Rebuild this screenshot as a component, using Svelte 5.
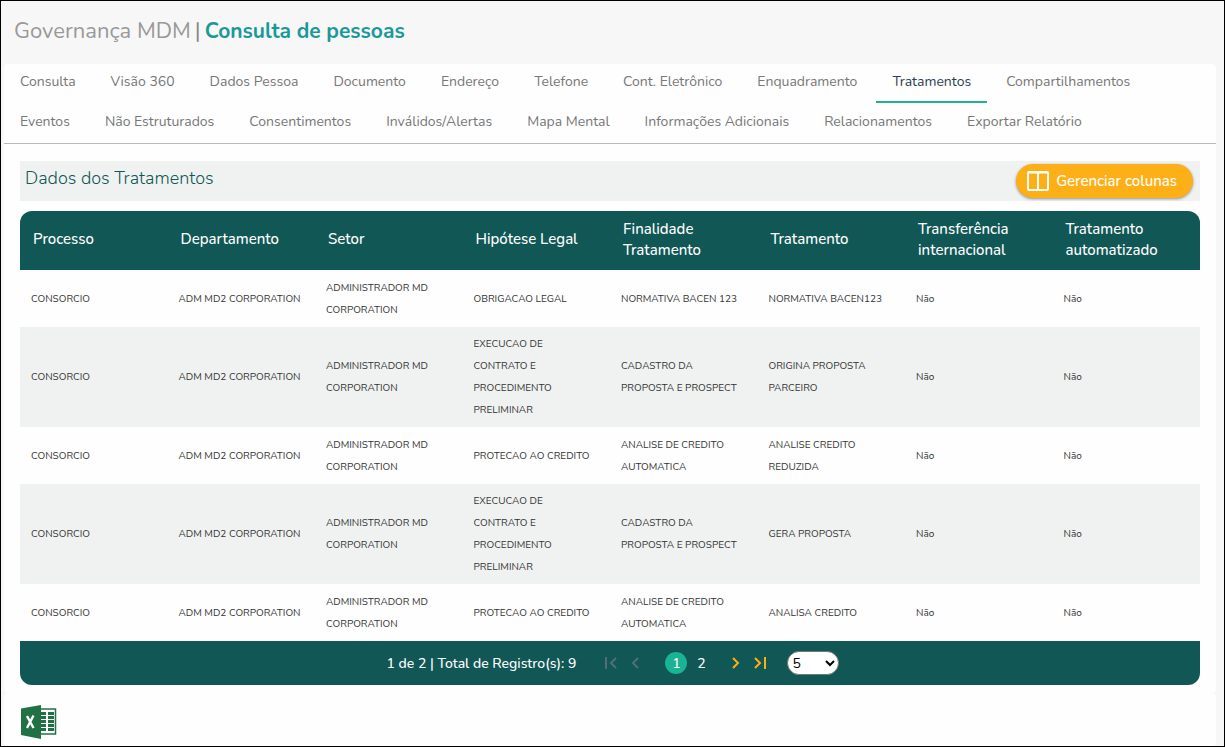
<script>
    let tabs = [
        'Consulta', 'Visão 360', 'Dados Pessoa', 'Documento', 'Endereço', 'Telefone',
        'Cont. Eletrônico', 'Enquadramento', 'Tratamentos', 'Compartilhamentos',
        'Eventos', 'Não Estruturados', 'Consentimentos', 'Inválidos/Alertas', 'Mapa Mental',
        'Informações Adicionais', 'Relacionamentos', 'Exportar Relatório'
    ];
    let activeTab = 'Tratamentos';

    let columns = [
        'Processo', 'Departamento', 'Setor', 'Hipótese Legal', 'Finalidade Tratamento',
        'Tratamento', 'Transferência internacional', 'Tratamento automatizado'
    ];

    const setor = 'ADMINISTRADOR MD CORPORATION';
    const depto = 'ADM MD2 CORPORATION';

    let rows = [
        ['CONSORCIO', depto, setor, 'OBRIGACAO LEGAL', 'NORMATIVA BACEN 123', 'NORMATIVA BACEN123', 'Não', 'Não'],
        ['CONSORCIO', depto, setor, 'EXECUCAO DE CONTRATO E PROCEDIMENTO PRELIMINAR', 'CADASTRO DA PROPOSTA E PROSPECT', 'ORIGINA PROPOSTA PARCEIRO', 'Não', 'Não'],
        ['CONSORCIO', depto, setor, 'PROTECAO AO CREDITO', 'ANALISE DE CREDITO AUTOMATICA', 'ANALISE CREDITO REDUZIDA', 'Não', 'Não'],
        ['CONSORCIO', depto, setor, 'EXECUCAO DE CONTRATO E PROCEDIMENTO PRELIMINAR', 'CADASTRO DA PROPOSTA E PROSPECT', 'GERA PROPOSTA', 'Não', 'Não'],
        ['CONSORCIO', depto, setor, 'PROTECAO AO CREDITO', 'ANALISE DE CREDITO AUTOMATICA', 'ANALISA CREDITO', 'Não', 'Não']
    ];

    let page = 1;
    let pageSize = 5;
</script>

<div class="page">
    <h1>Governança MDM<span class="bar">|</span><strong>Consulta de pessoas</strong></h1>

    <main class="card">
        <nav class="tabs">
            {#each tabs as tab}
                <button class="tab" class:active={tab === activeTab} on:click={() => (activeTab = tab)}>{tab}</button>
            {/each}
        </nav>

        <section class="content">
            <div class="section-bar">
                <h2>Dados dos Tratamentos</h2>
                <button class="manage">
                    <svg width="22" height="20" viewBox="0 0 22 20" fill="none" stroke="#fff" stroke-width="2" aria-hidden="true">
                        <rect x="1" y="1" width="20" height="18" rx="1" />
                        <path d="M1 1.5h20M11 2v17" />
                    </svg>
                    Gerenciar colunas
                </button>
            </div>

            <div class="grid">
                <table>
                    <thead>
                        <tr>
                            {#each columns as column}
                                <th scope="col">{column}</th>
                            {/each}
                        </tr>
                    </thead>
                    <tbody>
                        {#each rows as row}
                            <tr>
                                {#each row as cell}
                                    <td>{cell}</td>
                                {/each}
                            </tr>
                        {/each}
                    </tbody>
                </table>

                <div class="pager">
                    <span class="total">{page} de 2 | Total de Registro(s): 9</span>
                    <div class="arrows">
                        <button aria-label="Primeira página" disabled>
                            <svg width="14" height="14" viewBox="0 0 14 14"><path d="M2 1v12M12 2L7 7l5 5" /></svg>
                        </button>
                        <button aria-label="Página anterior" disabled>
                            <svg width="14" height="14" viewBox="0 0 14 14"><path d="M10 2L5 7l5 5" /></svg>
                        </button>
                    </div>
                    <div class="numbers">
                        {#each [1, 2] as n}
                            <button class:current={n === page} on:click={() => (page = n)}>{n}</button>
                        {/each}
                    </div>
                    <div class="arrows">
                        <button aria-label="Próxima página">
                            <svg width="14" height="14" viewBox="0 0 14 14"><path d="M4 2l5 5-5 5" /></svg>
                        </button>
                        <button aria-label="Última página">
                            <svg width="14" height="14" viewBox="0 0 14 14"><path d="M2 2l5 5-5 5M12 1v12" /></svg>
                        </button>
                    </div>
                    <select bind:value={pageSize} aria-label="Registros por página">
                        <option value={5}>5</option>
                        <option value={10}>10</option>
                        <option value={20}>20</option>
                    </select>
                </div>
            </div>
        </section>
    </main>

    <footer class="card export">
        <button aria-label="Exportar para Excel">
            <svg width="36" height="34" viewBox="0 0 36 34">
                <path d="M18 4h16.500v25H18z" fill="#fff" stroke="#207245" stroke-width="1.500" />
                <g fill="#207245">
                    <path d="M20 7h5v3h-5zM27 7h6v3h-6zM20 11h5v3h-5zM27 11h6v3h-6zM20 15h5v3h-5zM27 15h6v3h-6zM20 19h5v3h-5zM27 19h6v3h-6zM20 23h5v3h-5zM27 23h6v3h-6z" />
                    <path d="M0 3.500L20 0v34L0 30z" />
                </g>
                <path d="M6 11l6.500 12M12.500 10.500L6 23" stroke="#fff" stroke-width="2.400" />
            </svg>
        </button>
    </footer>
</div>

<style>
    :global(body) {
        margin: 0;
        background: #f7f7f7;
    }
    .page {
        display: flex;
        flex-direction: column;
        box-sizing: border-box;
        min-height: 100vh;
        padding: 0 8px 0 3px;
        border: 1px solid #000;
        font-family: Nunito, Lato, sans-serif;
    }
    button, select {
        font-family: inherit;
    }
    button {
        padding: 0;
        border: none;
        background: none;
        cursor: pointer;
    }
    h1 {
        margin: 0;
        padding: 14px 10px 17px;
        color: #999;
        font-size: 22px;
        font-weight: 400;
        line-height: 32px;
    }
    h1 strong {
        color: #1a9999;
        font-size: 21px;
        font-weight: 700;
    }
    .bar {
        padding: 0 4px;
        color: #888;
    }
    .card {
        background: #fefefe;
        border-radius: 4px;
    }
    .tabs {
        display: flex;
        flex-wrap: wrap;
        gap: 1px 3px;
        border-bottom: 1px solid #b8b8b8;
    }
    .tab {
        height: 39px;
        padding: 0 16px 2px;
        border-bottom: 2px solid transparent;
        color: #777;
        font-size: 14px;
        line-height: 35px;
    }
    .tab.active {
        border-color: #1ab394;
        color: #2c3e50;
    }
    .content {
        padding: 17px 16px 8px;
    }
    .section-bar {
        display: flex;
        justify-content: space-between;
        align-items: flex-start;
        height: 40px;
        margin-bottom: 10px;
        background: #f0f2f1;
    }
    h2 {
        margin: 0;
        padding-left: 5px;
        color: #115756;
        font-size: 18px;
        font-weight: 300;
        line-height: 34px;
    }
    .manage {
        display: flex;
        align-items: center;
        gap: 7px;
        height: 34px;
        margin: 3px 7px 0 0;
        padding: 0 16px 0 11px;
        border-radius: 17px;
        background: #fdaf17;
        box-shadow: 0 1px 3px rgba(0, 0, 0, 0.4);
        color: #fff;
        font-size: 15px;
        font-weight: 500;
    }
    .grid {
        overflow: hidden;
        border-radius: 12px;
    }
    table {
        width: 100%;
        border-collapse: collapse;
        table-layout: fixed;
    }
    th {
        height: 57px;
        padding: 0 13px 2px;
        background: #115756;
        color: #fff;
        font-size: 15px;
        font-weight: 500;
        line-height: 21px;
        text-align: left;
    }
    td {
        height: 45px;
        padding: 6px 11px;
        color: #333;
        font-size: 10px;
        line-height: 22px;
    }
    tbody tr:nth-child(even) {
        background: #f0f2f1;
    }
    .pager {
        display: flex;
        justify-content: center;
        align-items: center;
        gap: 20px;
        height: 44px;
        padding-left: 6px;
        background: #115756;
        color: #fff;
        font-size: 14px;
        font-weight: 500;
    }
    .total {
        margin-right: 8px;
    }
    .arrows {
        display: flex;
        gap: 10px;
    }
    .arrows button {
        display: flex;
    }
    .arrows path {
        fill: none;
        stroke: #fdaf17;
        stroke-width: 2;
    }
    .arrows button:disabled path {
        stroke: #526f78;
    }
    .numbers {
        display: flex;
        gap: 3px;
        margin: 0 -3px 0 3px;
    }
    .numbers button {
        width: 22px;
        height: 22px;
        border-radius: 50%;
        color: #fff;
        font-size: 14px;
        font-weight: 500;
    }
    .numbers .current {
        background: #1ab394;
    }
    select {
        width: 52px;
        height: 24px;
        border: 1px solid #767676;
        border-radius: 12px;
        background: #fff;
        color: #000;
        font-size: 14px;
    }
    .export {
        flex: 1;
        padding: 12px 17px 6px;
    }
    .export button {
        display: flex;
    }
</style>
